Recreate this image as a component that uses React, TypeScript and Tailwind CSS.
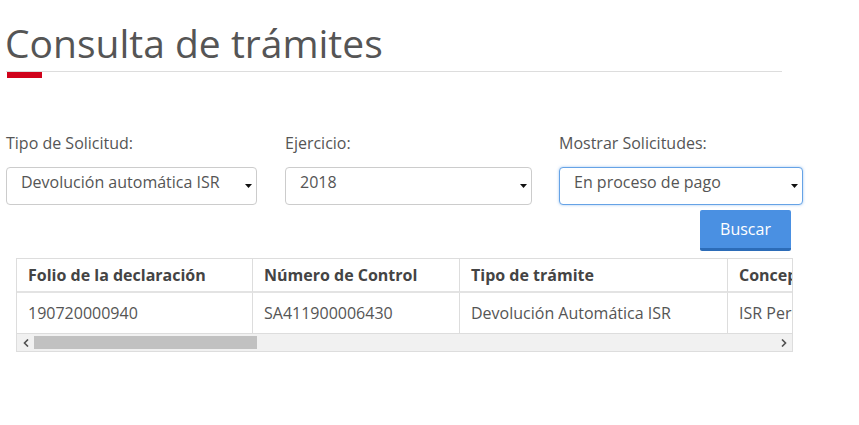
import React from 'react'

const font = { fontFamily: '"Open Sans", "Liberation Sans", sans-serif' }

function Caret() {
  return (
    <svg width="7" height="4" viewBox="0 0 7 4" className="shrink-0">
      <path d="M0 0h7L3.5 4z" fill="#111" />
    </svg>
  )
}

function FakeSelect({ value, width, focused }: { value: string; width: string; focused?: boolean }) {
  return (
    <div
      className={`flex h-[38px] items-start justify-between rounded-[4px] border bg-white pl-[14px] pr-[4px] pt-[3px] text-[16px] text-[#555] ${width} ${
        focused ? 'border-[#66a3e6] shadow-[0_0_3px_rgba(102,163,230,0.6)]' : 'border-[#ccc]'
      }`}
    >
      <span className="leading-[22px]">{value}</span>
      <span className="mt-[13px]">
        <Caret />
      </span>
    </div>
  )
}

const cols = [
  { title: 'Folio de la declaración', value: '190720000940', w: 'w-[235px]' },
  { title: 'Número de Control', value: 'SA411900006430', w: 'w-[207px]' },
  { title: 'Tipo de trámite', value: 'Devolución Automática ISR', w: 'w-[268px]' },
  { title: 'Concepto', value: 'ISR Personas Físicas', w: 'w-[200px]' },
]

export default function App() {
  return (
    <div className="h-[425px] w-[859px] overflow-hidden bg-white text-[#555]" style={font}>
      <div className="pl-[5px] pt-[18px]">
        <h1 className="text-[39px] leading-[50px] text-[#555]">Consulta de trámites</h1>
        <div className="ml-[1px] mt-[3px] w-[776px] border-t border-[#ddd] pl-[1px]">
          <div className="h-[6px] w-[35px] bg-[#d0021b]" />
        </div>
      </div>

      <div className="mt-[54px] flex pl-[6px] text-[16px]">
        <div className="w-[279px]">
          <label className="block leading-[22px]">Tipo de Solicitud:</label>
          <div className="mt-[13px]">
            <FakeSelect value="Devolución automática ISR" width="w-[251px]" />
          </div>
        </div>
        <div className="w-[274px]">
          <label className="block leading-[22px]">Ejercicio:</label>
          <div className="mt-[13px]">
            <FakeSelect value="2018" width="w-[247px]" />
          </div>
        </div>
        <div className="w-[244px]">
          <label className="block leading-[22px]">Mostrar Solicitudes:</label>
          <div className="mt-[13px]">
            <FakeSelect value="En proceso de pago" width="w-[244px]" focused />
          </div>
          <div className="mt-[5px] flex justify-end pr-[12px]">
            <button className="h-[41px] w-[91px] rounded-[2px] border-b-[3px] border-[#2c6cb8] bg-[#4a90e2] text-[16px] text-white">
              Buscar
            </button>
          </div>
        </div>
      </div>

      <div className="ml-[16px] mt-[7px] w-[777px] border border-[#ddd] bg-white">
        <div className="overflow-hidden">
          <div className="flex w-max text-[16px] font-bold text-[#444]">
            {cols.map((c, i) => (
              <div
                key={c.title}
                className={`${c.w} h-[34px] shrink-0 border-b-2 border-[#e3e3e3] px-[11px] leading-[32px] ${i > 0 ? 'border-l border-l-[#ddd]' : ''}`}
              >
                {c.title}
              </div>
            ))}
          </div>
          <div className="flex w-max text-[16px] text-[#555]">
            {cols.map((c, i) => (
              <div
                key={c.title}
                className={`${c.w} h-[41px] shrink-0 border-b border-[#ddd] px-[11px] leading-[41px] ${i > 0 ? 'border-l border-l-[#ddd]' : ''}`}
              >
                {c.value}
              </div>
            ))}
          </div>
        </div>
        <div className="flex h-[17px] items-center bg-[#f1f1f1]">
          <span className="flex w-[17px] justify-center">
            <svg width="6" height="8" viewBox="0 0 6 8">
              <path d="M5 0.5L1.5 4L5 7.5" stroke="#505050" strokeWidth="1.6" fill="none" />
            </svg>
          </span>
          <div className="h-[13px] w-[223px] bg-[#c1c1c1]" />
          <div className="flex-1" />
          <span className="flex w-[17px] justify-center">
            <svg width="6" height="8" viewBox="0 0 6 8">
              <path d="M1 0.5L4.5 4L1 7.5" stroke="#505050" strokeWidth="1.6" fill="none" />
            </svg>
          </span>
        </div>
      </div>
    </div>
  )
}
